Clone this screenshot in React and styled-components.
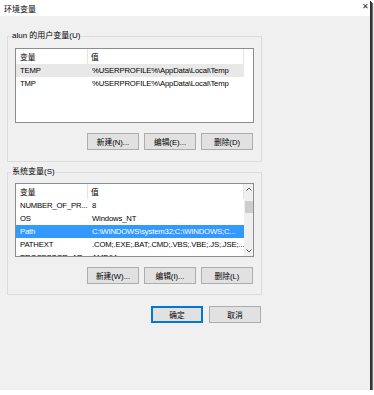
import React from "react";
import styled, { createGlobalStyle } from "styled-components";

const Global = createGlobalStyle`
  html, body { margin: 0; padding: 0; background: #fff; }
  body { font-family: "Liberation Sans", "Noto Sans CJK SC", sans-serif; }
`;

const Window = styled.div`
  width: 370px;
  height: 390px;
  background: #f0f0f0;
  box-shadow: 1px 1px 0 #2e2e2e, 2px 2px 0 #3a3a3a, 3px 3px 1px rgba(0, 0, 0, 0.55);
  display: flex;
  flex-direction: column;
  font-size: 7.7px;
  color: #000;
`;

const TitleBar = styled.div`
  height: 16px;
  flex: none;
  background: #fff;
  display: flex;
  align-items: center;
  justify-content: space-between;
  padding: 0 1px 0 4px;
  font-size: 8px;
`;

const Close = styled.span`
  font-size: 8px;
  line-height: 10px;
  color: #222;
  margin-top: -2px;
`;

const Body = styled.div`
  display: flex;
  flex-direction: column;
  padding-left: 7px;
  width: 255px;
`;

const Group = styled.fieldset`
  margin: ${(p) => p.$top}px 0 0;
  padding: 0;
  min-inline-size: 0;
  border: 1px solid #dcdcdc;
`;

const Legend = styled.legend`
  margin-left: 3px;
  padding: 0 1px;
  font-size: 8px;
  line-height: 10px;
`;

const GroupInner = styled.div`
  display: flex;
  flex-direction: column;
  padding: ${(p) => p.$top}px 7px ${(p) => p.$bottom}px;
`;

const List = styled.div`
  height: ${(p) => p.$h}px;
  box-sizing: border-box;
  border: 1px solid #8a8d93;
  background: #fff;
  display: flex;
  overflow: hidden;
`;

const Table = styled.div`
  width: 228px;
  flex: none;
  display: flex;
  flex-direction: column;
`;

const HeadRow = styled.div`
  height: 15px;
  flex: none;
  display: grid;
  grid-template-columns: 72px 1fr;
  border-right: 1px solid #e5e5e5;
`;

const HeadCell = styled.div`
  display: flex;
  align-items: center;
  padding-left: ${(p) => (p.$first ? 4 : 3)}px;
  border-right: ${(p) => (p.$first ? "1px solid #e5e5e5" : "none")};
`;

const Row = styled.div`
  height: 13px;
  flex: none;
  display: grid;
  grid-template-columns: 72px 1fr;
  align-items: center;
  background: ${(p) =>
    p.$sel === "blue" ? "#3399ff" : p.$sel === "gray" ? "#e8e8e8" : "transparent"};
  color: ${(p) => (p.$sel === "blue" ? "#fff" : "#000")};
`;

const Cell = styled.div`
  padding-left: 4px;
  white-space: nowrap;
  letter-spacing: -0.15px;
`;

const ScrollBar = styled.div`
  width: 10px;
  flex: none;
  margin-left: auto;
  background: #f0f0f0;
  display: flex;
  flex-direction: column;
  align-items: center;
`;

const Arrow = styled.div`
  height: 10px;
  flex: none;
  display: flex;
  align-items: center;
  justify-content: center;
`;

const Track = styled.div`
  flex: 1;
  width: 100%;
  display: flex;
  flex-direction: column;
  align-items: center;
`;

const Thumb = styled.div`
  width: 8px;
  height: 12px;
  margin-top: 7px;
  background: #cdcdcd;
`;

const Buttons = styled.div`
  display: flex;
  justify-content: flex-end;
  gap: 5px;
  margin-top: 10px;
  padding-right: 1px;
`;

const Button = styled.button`
  width: 52px;
  height: 17px;
  box-sizing: border-box;
  padding: 0;
  background: #e1e1e1;
  border: 1px solid #adadad;
  font-family: "Liberation Sans", "Noto Sans CJK SC", sans-serif;
  font-size: 7.7px;
  color: #000;
  ${(p) => p.$primary && "border-color: #0078d7; box-shadow: inset 0 0 0 1px #0078d7;"}
`;

const Footer = styled.div`
  display: flex;
  justify-content: flex-end;
  gap: 6px;
  margin-top: 11px;
  padding-right: 1px;
`;

const Chevron = ({ up }) => (
  <svg width="6" height="4" viewBox="0 0 6 4">
    <path
      d={up ? "M0.5 3.5 L3 1 L5.5 3.5" : "M0.5 0.5 L3 3 L5.5 0.5"}
      fill="none"
      stroke="#606060"
      strokeWidth="1"
    />
  </svg>
);

const userVars = [
  ["TEMP", "%USERPROFILE%\\AppData\\Local\\Temp", "gray"],
  ["TMP", "%USERPROFILE%\\AppData\\Local\\Temp"],
];

const sysVars = [
  ["NUMBER_OF_PR...", "8"],
  ["OS", "Windows_NT"],
  ["Path", "C:\\WINDOWS\\system32;C:\\WINDOWS;C...", "blue"],
  ["PATHEXT", ".COM;.EXE;.BAT;.CMD;.VBS;.VBE;.JS;.JSE;..."],
  ["PROCESSOR_AR...", "AMD64"],
];

function VarTable({ rows }) {
  return (
    <Table>
      <HeadRow>
        <HeadCell $first>变量</HeadCell>
        <HeadCell>值</HeadCell>
      </HeadRow>
      {rows.map(([k, v, sel]) => (
        <Row key={k} $sel={sel}>
          <Cell>{k}</Cell>
          <Cell>{v}</Cell>
        </Row>
      ))}
    </Table>
  );
}

export default function App() {
  return (
    <>
      <Global />
      <Window>
        <TitleBar>
          <span>环境变量</span>
          <Close>✕</Close>
        </TitleBar>
        <Body>
          <Group $top={15}>
            <Legend>alun 的用户变量(U)</Legend>
            <GroupInner $top={7} $bottom={11}>
              <List $h={75}>
                <VarTable rows={userVars} />
              </List>
              <Buttons>
                <Button>新建(N)...</Button>
                <Button>编辑(E)...</Button>
                <Button>删除(D)</Button>
              </Buttons>
            </GroupInner>
          </Group>
          <Group $top={5}>
            <Legend>系统变量(S)</Legend>
            <GroupInner $top={6} $bottom={10}>
              <List $h={74}>
                <VarTable rows={sysVars} />
                <ScrollBar>
                  <Arrow>
                    <Chevron up />
                  </Arrow>
                  <Track>
                    <Thumb />
                  </Track>
                  <Arrow>
                    <Chevron />
                  </Arrow>
                </ScrollBar>
              </List>
              <Buttons>
                <Button>新建(W)...</Button>
                <Button>编辑(I)...</Button>
                <Button>删除(L)</Button>
              </Buttons>
            </GroupInner>
          </Group>
          <Footer>
            <Button $primary>确定</Button>
            <Button>取消</Button>
          </Footer>
        </Body>
      </Window>
    </>
  );
}
